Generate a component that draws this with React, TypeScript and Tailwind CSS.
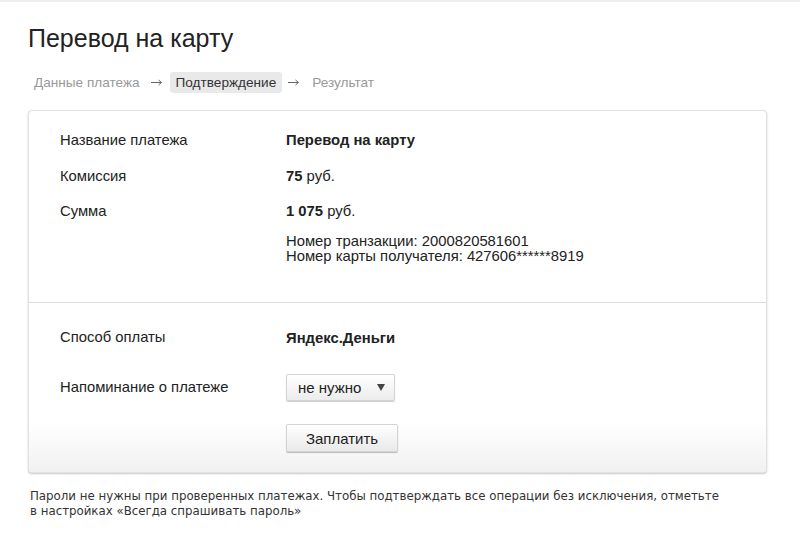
// Подтверждение перевода на карту

const Arrow = ({ className = '' }: { className?: string }) => (
  <svg width="11" height="7" viewBox="0 0 11 7" className={`shrink-0 ${className}`}>
    <path d="M0 3.5H10" stroke="#666" strokeWidth="1" />
    <path d="M7.5 1L10.5 3.5L7.5 6" stroke="#666" strokeWidth="1" fill="none" />
  </svg>
);

const Row = ({ label, children, className = '' }: { label: string; children: React.ReactNode; className?: string }) => (
  <div className={`flex items-center ${className}`}>
    <div className="w-[226px] shrink-0">{label}</div>
    <div>{children}</div>
  </div>
);

const App = () => {
  return (
    <div
      className="min-h-screen bg-white border-t-2 border-[#efefef] px-[28px] pt-[22px] text-[#222]"
      style={{ fontFamily: '"Liberation Sans", Arial, sans-serif' }}
    >
      {/* Заголовок */}
      <h1 className="text-[25px] leading-[28px] font-normal text-[#222]">Перевод на карту</h1>

      {/* Шаги */}
      <div className="mt-[20px] flex items-center text-[13.6px] leading-[21px]">
        <span className="px-[6px] text-[#999]">Данные платежа</span>
        <Arrow className="ml-[5px] mr-[8px]" />
        <span className="px-[6px] rounded-[3px] bg-[#e9e9e9] text-[#333]">Подтверждение</span>
        <Arrow className="ml-[6px] mr-[7px]" />
        <span className="px-[6px] text-[#999]">Результат</span>
      </div>

      {/* Карточка платежа */}
      <div className="mt-[17px] w-[739px] rounded-[4px] border border-[#e2e2e2] bg-white shadow-[0_1px_2px_rgba(0,0,0,0.22)] text-[14.8px] leading-[15px]">
        <div className="pl-[31px] pt-[22px] pb-[38px] border-b border-[#dcdcdc]">
          <Row label="Название платежа">
            <b>Перевод на карту</b>
          </Row>
          <Row label="Комиссия" className="mt-[21px]">
            <b>75</b> руб.
          </Row>
          <Row label="Сумма" className="mt-[20px]">
            <b>1 075</b> руб.
          </Row>
          <div className="mt-[15px] ml-[226px]">
            <div>Номер транзакции: 2000820581601</div>
            <div>Номер карты получателя: 427606******8919</div>
          </div>
        </div>

        <div className="pl-[31px] pt-[27px] pb-[20px] rounded-b-[4px] bg-linear-to-b from-white from-70% to-[#f1f1f1]">
          <Row label="Способ оплаты">
            <b className="relative top-[1px]">Яндекс.Деньги</b>
          </Row>
          <Row label="Напоминание о платеже" className="mt-[29px]">
            <div className="flex h-[27px] w-[109px] items-center justify-between rounded-[2px] border border-[#d4d4d4] bg-linear-to-b from-white to-[#ececec] pl-[11px] pr-[9px] text-[15px] shadow-[0_1px_1px_rgba(0,0,0,0.2)]">
              <span>не нужно</span>
              <svg width="8" height="7" viewBox="0 0 8 7">
                <path d="M0 0H8L4 7Z" fill="#444" />
              </svg>
            </div>
          </Row>
          <div className="mt-[23px] ml-[226px]">
            <button className="h-[28px] w-[112px] rounded-[2px] border border-[#d4d4d4] bg-linear-to-b from-white to-[#e9e9e9] text-[15px] text-[#222] shadow-[0_1px_1px_rgba(0,0,0,0.25)]">
              Заплатить
            </button>
          </div>
        </div>
      </div>

      {/* Примечание */}
      <p
        className="mt-[16px] pl-[2px] text-[11.8px] leading-[15px] text-[#333] whitespace-nowrap"
        style={{ fontFamily: '"DejaVu Sans", Verdana, sans-serif' }}
      >
        Пароли не нужны при проверенных платежах. Чтобы подтверждать все операции без исключения, отметьте
        <br />в настройках «Всегда спрашивать пароль»
      </p>
    </div>
  );
};

export default App;
